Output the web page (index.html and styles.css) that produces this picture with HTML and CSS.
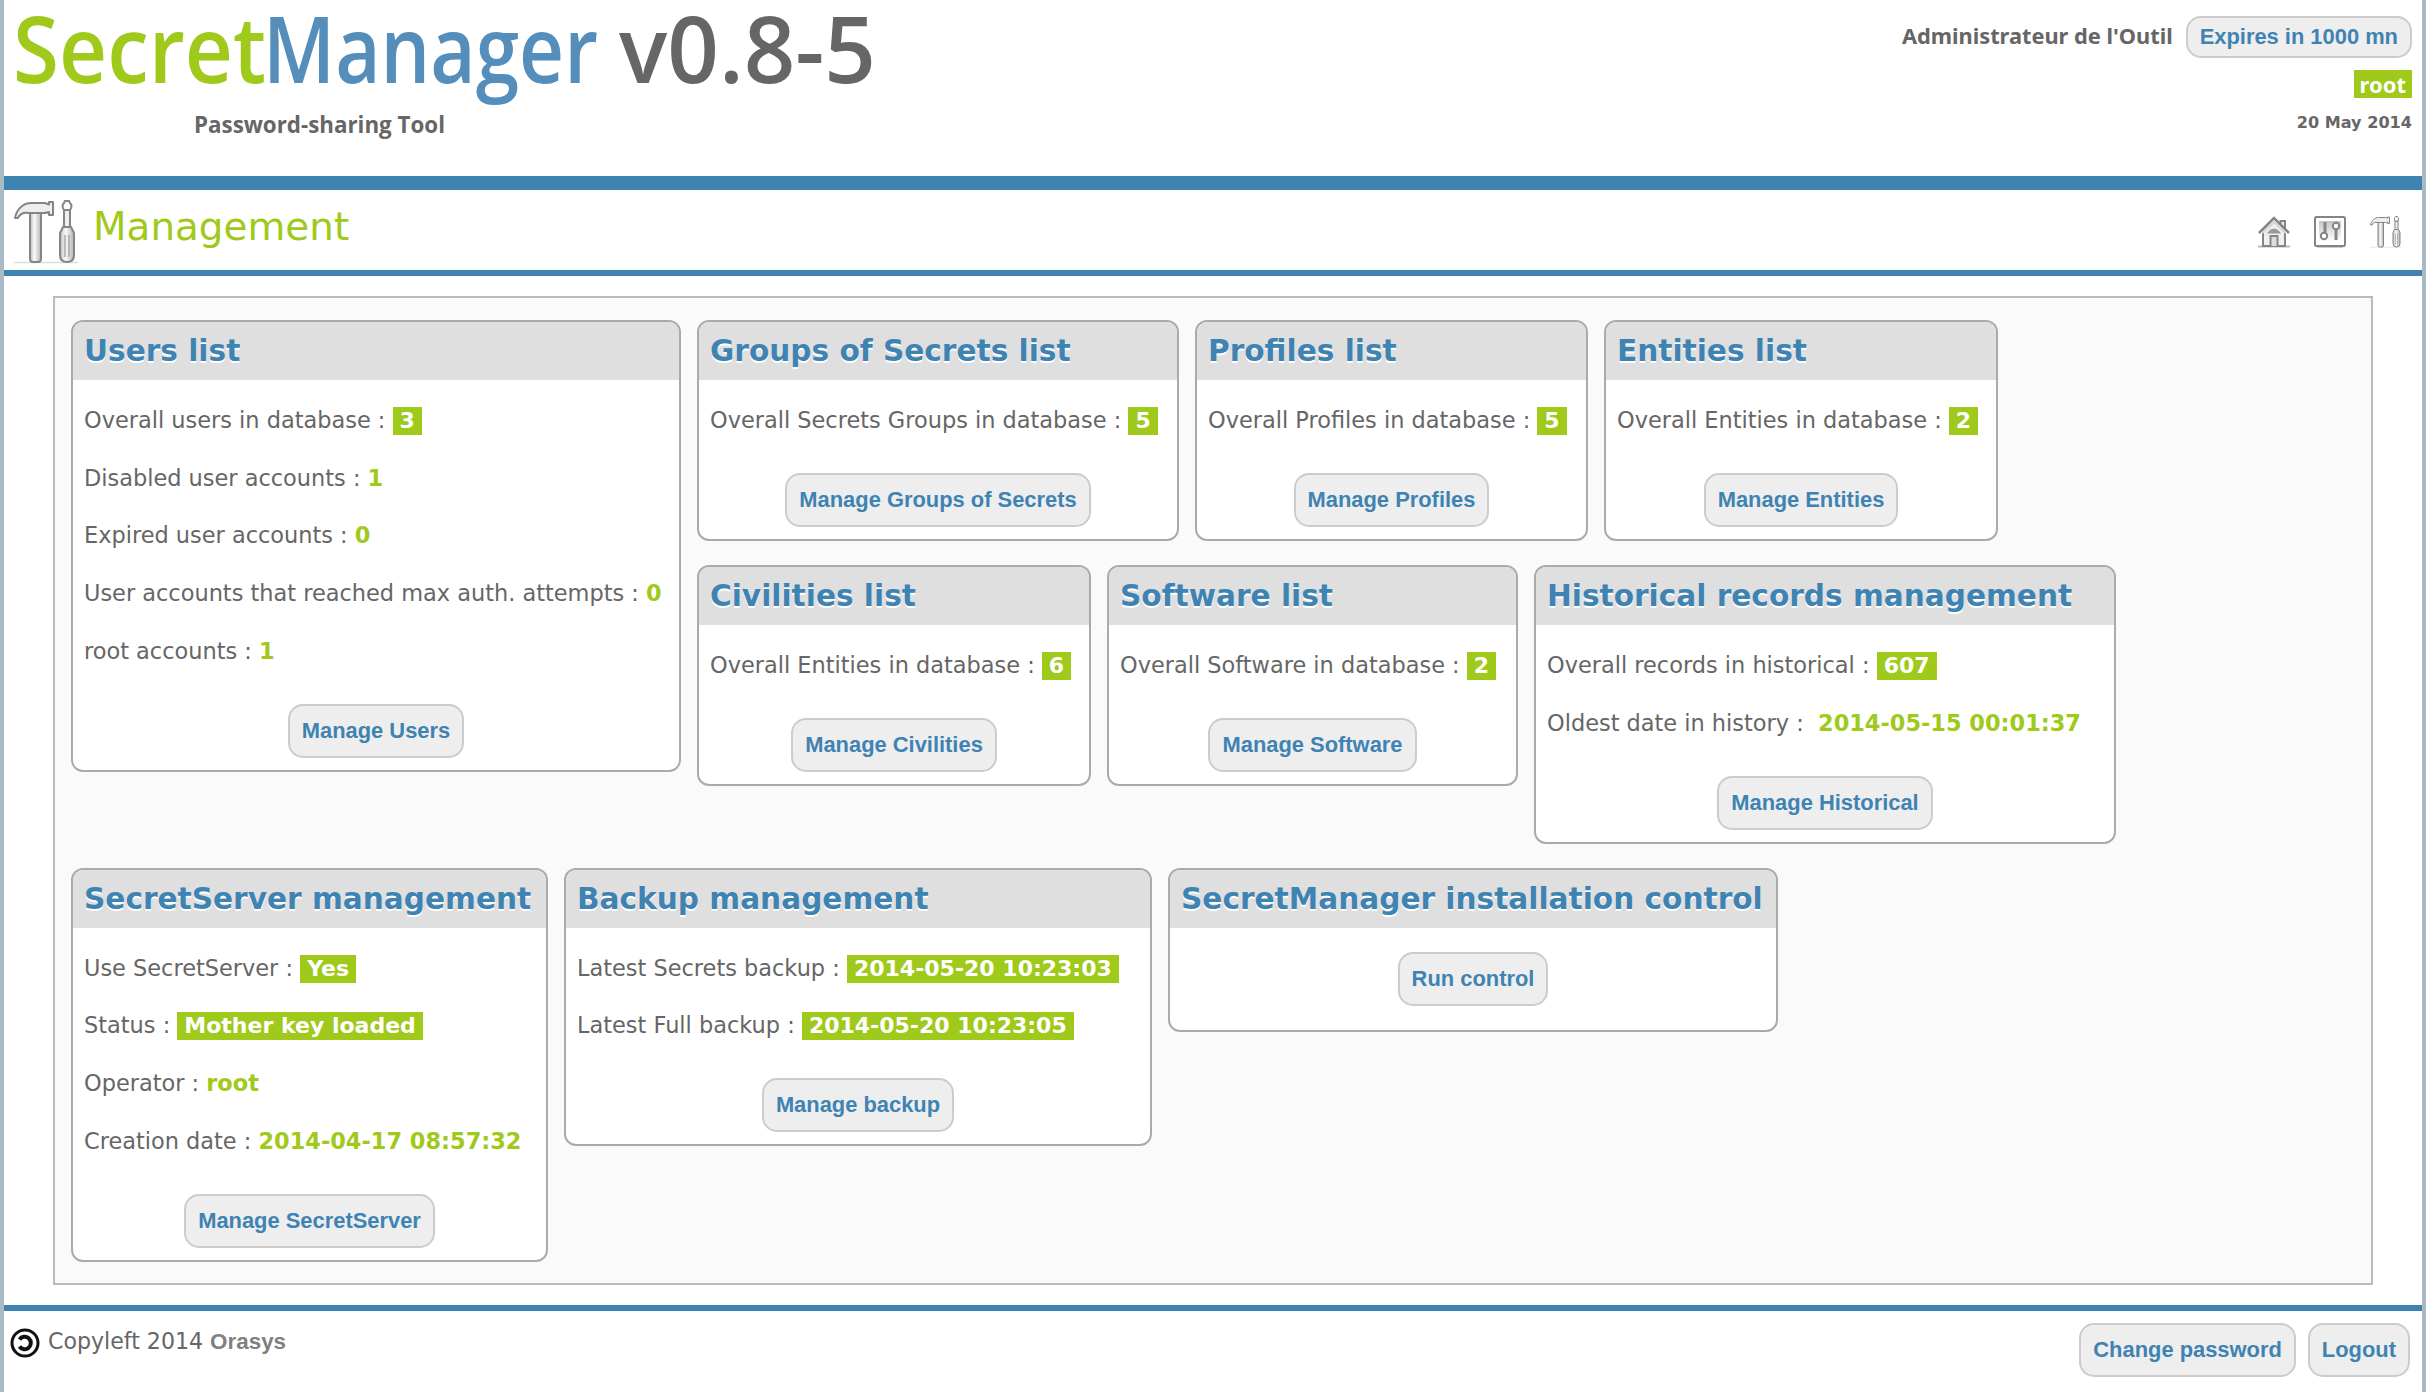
FILE: index.html
```
<!DOCTYPE html>
<html lang="en">
<head>
<meta charset="utf-8">
<title>SecretManager - Management</title>
<link rel="stylesheet" href="styles.css">
</head>
<body>
<svg width="0" height="0" class="defs" aria-hidden="true">
  <defs>
    <linearGradient id="metal" x1="0" x2="1" y1="0" y2="0">
      <stop offset="0" stop-color="#bbb"/><stop offset=".4" stop-color="#fafafa"/><stop offset="1" stop-color="#b4b4b4"/>
    </linearGradient>
    <linearGradient id="panel" x1="0" x2="0" y1="0" y2="1">
      <stop offset="0" stop-color="#c4c4c4"/><stop offset="1" stop-color="#fff"/>
    </linearGradient>
    <symbol id="tools" viewBox="0 0 64 64">
      <path d="M0 62.5H64" stroke="#ddd" stroke-width="1.5"/>
      <path d="M16 13h11v46q0 3-3 3h-5q-3 0-3-3z" fill="url(#metal)" stroke="#858585" stroke-width="2"/>
      <path d="M1 18C3 8 10 3 17 3h14l4 1.500V2h4v13h-4v-3l-4 1H16C10 12 6 13 4 18z" fill="#eee" stroke="#858585" stroke-width="2" stroke-linejoin="round"/>
      <path d="M50 10h6v18h-6z" fill="#eee" stroke="#858585" stroke-width="2"/>
      <path d="M50 10q-3-4 0-7l1-2h4l1 2q3 3 0 7z" fill="#fff" stroke="#858585" stroke-width="2"/>
      <path d="M49 27h8l3 6v22q0 7-7 7t-7-7V33z" fill="url(#metal)" stroke="#858585" stroke-width="2"/>
      <path d="M51 35v22M55 35v22" stroke="#aaa" stroke-width="1.500"/>
    </symbol>
  </defs>
</svg>
<div class="page">
  <header class="banner">
    <div class="brand">
      <svg class="logo" width="880" height="108" viewBox="0 0 880 108">
        <g class="logo-text">
          <text x="13" y="83" textLength="253" lengthAdjust="spacingAndGlyphs" fill="#9fc91b">Secret</text>
          <text x="263" y="83" textLength="335" lengthAdjust="spacingAndGlyphs" fill="#558eba">Manager</text>
          <text x="619" y="83" textLength="257" lengthAdjust="spacingAndGlyphs" fill="#666">v0.8-5</text>
        </g>
      </svg>
      <p class="tagline">Password-sharing Tool</p>
    </div>
    <div class="session">
      <div class="session-user"><span>Administrateur de l'Outil</span><a class="btn btn-slim">Expires in 1000 mn</a></div>
      <span class="tag">root</span>
      <span class="date">20 May 2014</span>
    </div>
  </header>
  <div class="titlebar">
    <svg class="title-icon" width="64" height="64"><use href="#tools"/></svg>
    <h1>Management</h1>
    <nav class="shortcuts">
      <svg width="32" height="32" viewBox="0 0 32 32" fill="none" stroke="#858585" stroke-width="2">
        <path d="M0 30.500H32" stroke="#bbb"/>
        <path d="M22.500 9V5h4.500v9" fill="#eee"/>
        <path d="M5 16V30H27V16L16 6z" fill="#f0f0f0"/>
        <path d="M1 17L16 2 31 17" stroke-width="2.500"/>
        <path d="M4 17L16 6 28 17" stroke="#ddd" stroke-width="2"/>
        <path d="M12.500 30V20h7v10" fill="#ddd"/>
        <path d="M11 16.500q5-6 10 0z" fill="#999" stroke="#999"/>
      </svg>
      <svg width="32" height="32" viewBox="0 0 32 32" fill="none" stroke="#858585" stroke-width="2">
        <path d="M3 31.500H29" stroke="#ccc" stroke-width="1"/>
        <rect x="1" y="1" width="30" height="29" rx="1.500" fill="#fff"/>
        <rect x="5" y="5" width="22" height="20" fill="url(#panel)" stroke="none"/>
        <path d="M11 6v11M22 12v12" stroke-width="3"/>
        <circle cx="10" cy="20" r="3.200" fill="#fff"/><circle cx="22" cy="10" r="3.200" fill="#fff"/>
      </svg>
      <svg width="32" height="32"><use href="#tools"/></svg>
    </nav>
  </div>
  <main class="board">
    <section class="group">
      <article class="card w-users">
        <h2>Users list</h2>
        <p>Overall users in database : <b class="tag">3</b></p>
        <p>Disabled user accounts : <b>1</b></p>
        <p>Expired user accounts : <b>0</b></p>
        <p>User accounts that reached max auth. attempts : <b>0</b></p>
        <p>root accounts : <b>1</b></p>
        <a class="btn">Manage Users</a>
      </article>
      <div class="stack">
        <div class="line">
          <article class="card w-groups"><h2>Groups of Secrets list</h2><p>Overall Secrets Groups in database : <b class="tag">5</b></p><a class="btn">Manage Groups of Secrets</a></article>
          <article class="card w-profiles"><h2>Profiles list</h2><p>Overall Profiles in database : <b class="tag">5</b></p><a class="btn">Manage Profiles</a></article>
          <article class="card w-entities"><h2>Entities list</h2><p>Overall Entities in database : <b class="tag">2</b></p><a class="btn">Manage Entities</a></article>
        </div>
        <div class="line">
          <article class="card w-civilities"><h2>Civilities list</h2><p>Overall Entities in database : <b class="tag">6</b></p><a class="btn">Manage Civilities</a></article>
          <article class="card w-software"><h2>Software list</h2><p>Overall Software in database : <b class="tag">2</b></p><a class="btn">Manage Software</a></article>
          <article class="card w-history"><h2>Historical records management</h2><p>Overall records in historical : <b class="tag">607</b></p><p>Oldest date in history : &nbsp;<b>2014-05-15 00:01:37</b></p><a class="btn">Manage Historical</a></article>
        </div>
      </div>
    </section>
    <section class="group">
      <article class="card w-server">
        <h2>SecretServer management</h2>
        <p>Use SecretServer : <b class="tag">Yes</b></p>
        <p>Status : <b class="tag">Mother key loaded</b></p>
        <p>Operator : <b>root</b></p>
        <p>Creation date : <b>2014-04-17 08:57:32</b></p>
        <a class="btn">Manage SecretServer</a>
      </article>
      <article class="card w-backup">
        <h2>Backup management</h2>
        <p>Latest Secrets backup : <b class="tag">2014-05-20 10:23:03</b></p>
        <p>Latest Full backup : <b class="tag">2014-05-20 10:23:05</b></p>
        <a class="btn">Manage backup</a>
      </article>
      <article class="card w-control">
        <h2>SecretManager installation control</h2>
        <a class="btn btn-only">Run control</a>
      </article>
    </section>
  </main>
  <footer class="footer">
    <div class="copyleft">
      <svg width="30" height="30" viewBox="0 0 30 30" fill="none" stroke="#111">
        <circle cx="15" cy="15" r="13" stroke-width="3"/>
        <path d="M9.500 11.500A6.200 6.200 0 1 1 9.500 18.500" stroke-width="4"/>
      </svg>
      <span>Copyleft 2014 <strong>Orasys</strong></span>
    </div>
    <div class="actions"><a class="btn">Change password</a><a class="btn">Logout</a></div>
  </footer>
</div>
</body>
</html>
```
FILE: styles.css
```
* { box-sizing: border-box; }
body {
  margin: 0;
  background: #fff;
  color: #666;
  font: 22.45px/28px "DejaVu Sans", Verdana, sans-serif;
}
h1, h2, p { margin: 0; }
.defs { display: block; }
.page {
  height: 1392px;
  overflow: hidden;
  border: solid #a8bac3;
  border-width: 0 4px;
}

.banner {
  display: flex;
  justify-content: space-between;
  height: 190px;
  border-bottom: 14px solid #3f83b3;
}
.logo { display: block; margin-left: -4px; }
.logo-text { font: 600 92px "Open Sans", sans-serif; }
.tagline {
  padding: 3px 0 0 190px;
  font: bold 22.35px/28px "Open Sans", sans-serif;
}
.session {
  display: flex;
  flex-direction: column;
  align-items: flex-end;
  padding: 16px 10px 0 0;
}
.session-user {
  display: flex;
  align-items: center;
  gap: 13px;
  height: 42px;
  margin-bottom: 12px;
  font: bold 21.8px/28px "Noto Sans", sans-serif;
}
.session-user span { position: relative; top: -1px; }
.date {
  margin-top: 11px;
  font-size: 16.1px;
  font-weight: bold;
}

.titlebar {
  display: flex;
  height: 86px;
  padding-left: 10px;
  border-bottom: 6px solid #3f83b3;
}
.title-icon { margin-top: 10px; }
h1 {
  padding: 14px 0 0 15px;
  color: #9fc91b;
  font-size: 38.9px;
  font-weight: normal;
  line-height: 46px;
}
.shortcuts {
  display: flex;
  gap: 24px;
  margin: 26px 20px 0 auto;
}

.board {
  display: flex;
  flex-direction: column;
  gap: 24px;
  height: 989px;
  margin: 20px 49px;
  padding: 22px 16px;
  border: 2px solid #bbb;
  background: #fafafa;
}
.group, .line { display: flex; align-items: flex-start; gap: 16px; }
.stack { display: flex; flex-direction: column; gap: 24px; }
.card {
  display: flex;
  flex-direction: column;
  overflow: hidden;
  padding-bottom: 12px;
  border: 2px solid #aaa;
  border-radius: 12px;
  background: #fff;
  white-space: nowrap;
}
.card h2 {
  height: 58px;
  margin-bottom: 26px;
  padding-left: 11px;
  background: #dfdfdf;
  color: #3f83b3;
  font-size: 29.6px;
  line-height: 59px;
  text-shadow: 0 2px 0 #fff;
}
.card p { height: 28px; margin-bottom: 29.7px; padding-left: 11px; }
.card b { color: #9fc91b; }
.card .btn { align-self: center; margin-top: 9.300px; }
.card .btn-only { margin: -2px 0 12px; }
.w-users { width: 610px; }
.w-groups { width: 482px; }
.w-profiles { width: 393px; }
.w-entities { width: 394px; }
.w-civilities { width: 394px; }
.w-software { width: 411px; }
.w-history { width: 582px; }
.w-server { width: 477px; }
.w-backup { width: 588px; }
.w-control { width: 610px; }

.tag, .card .tag {
  display: inline-block;
  padding: 0 7px;
  background: #9fc91b;
  color: #fff;
  font-size: 22px;
  font-weight: bold;
  line-height: 28px;
}
.session .tag { padding: 0 6px; font-family: "Noto Sans", sans-serif; }
.btn {
  display: block;
  height: 54px;
  padding: 0 12px;
  border: 2px solid #ccc;
  border-radius: 15px;
  background: #eee;
  color: #3f83b3;
  font: bold 21.9px/50px "Liberation Sans", Arial, sans-serif;
}
.btn-slim { height: 42px; line-height: 38px; }

.footer {
  display: flex;
  justify-content: space-between;
  padding: 18px 12px 0 6px;
  border-top: 6px solid #3f83b3;
}
.copyleft { display: flex; gap: 8px; font-size: 22.100px; }
.copyleft svg { margin: -1px 0 0; }
.copyleft span { position: relative; top: -2px; }
.copyleft strong { color: #808080; font-family: "Liberation Sans", Arial, sans-serif; font-size: 22.400px; }
.actions { display: flex; gap: 12px; margin-top: -6px; }
```
